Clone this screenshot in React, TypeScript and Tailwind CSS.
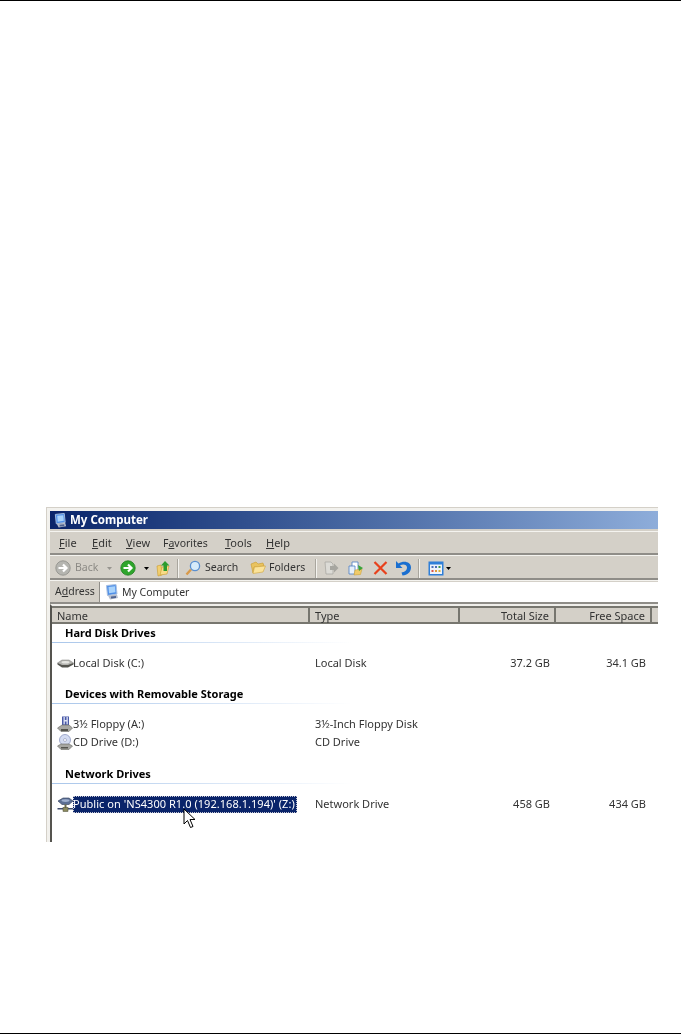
import type { ReactNode } from "react"

const font = "font-['Noto_Sans','Liberation_Sans',sans-serif]"

function U({ before = "", letter, after }: { before?: string; letter: string; after: string }) {
    return <span>{before}<span className="underline underline-offset-1">{letter}</span>{after}</span>
}

function ComputerIcon({ size = 16 }: { size?: number }) {
    return <svg width={size} height={size} viewBox="0 0 16 16" className="shrink-0">
        <path d="M2.5 1.5 L12 0.5 L13 10 L3.5 11.5 Z" fill="#4f8fe8" stroke="#a9c0e0" strokeWidth="1" />
        <path d="M4.5 3 L11 2.3 L11.5 8.2 L5 9.2 Z" fill="#a9d3fb" />
        <path d="M4 11.5 L13 10.5 L14 14 L6 15.5 Z" fill="#b4bccb" />
        <path d="M7 12.5 L12 12 L12 14 L7 14.5 Z" fill="#4f6390" />
    </svg>
}

function ArrowCircle({ color, dark, size = 16 }: { color: string; dark: string; size?: number }) {
    return <svg width={size} height={size} viewBox="0 0 16 16" className="shrink-0">
        <circle cx="8" cy="8" r="7.2" fill={color} stroke={dark} strokeWidth="0.8" />
        <path d="M3.5 8 H11 M8 4.5 L11.5 8 L8 11.5" fill="none" stroke="#fff" strokeWidth="2.2" />
    </svg>
}

function Caret({ color = "#000" }: { color?: string }) {
    return <svg width="5" height="3" viewBox="0 0 5 3" className="shrink-0"><path d="M0 0 H5 L2.5 3 Z" fill={color} /></svg>
}

function Sep() {
    return <div className="w-[2px] h-[19px] bg-[#a9a69e] border-r border-[#f4f3ef] shrink-0" />
}

function Folder({ w = 16 }: { w?: number }) {
    return <svg width={w} height="14" viewBox="0 0 16 14" className="shrink-0">
        <path d="M1 3 L6 1 L8 3 L13 2 L14 5 L4 6 L3 12 Z" fill="#e9c35f" stroke="#c99b2c" strokeWidth="0.6" />
        <path d="M3 12.5 L4.5 6 L15.5 5 L13 11 Z" fill="#fbe39a" stroke="#d2a63a" strokeWidth="0.6" />
    </svg>
}

function DiskIcon() {
    return <svg width="17" height="9" viewBox="0 0 17 9" className="shrink-0">
        <path d="M0.5 4 L5 1 H12 L16.5 4 L11 7 H5 Z" fill="#b4b4b0" stroke="#7c7c78" strokeWidth="0.5" />
        <path d="M0.5 4 L5 6 H11 L16.5 4 V5.5 L11 8.5 H5 L0.5 5.5 Z" fill="#55554f" />
        <ellipse cx="8.5" cy="3.2" rx="4" ry="1.3" fill="#e6e6e2" />
    </svg>
}

function FloppyIcon() {
    return <svg width="16" height="17" viewBox="0 0 16 17" className="shrink-0">
        <path d="M5 0.5 H12 V10 H5 Z" fill="#4a5aa8" />
        <path d="M6.5 1 H7.8 V4 H9.5 V1 H10.8 V8.5 H9.5 V5.5 H7.8 V8.5 H6.5 Z" fill="#dfe4f5" />
        <path d="M0.5 12 L5 9 H12 L15.5 12 L12 15.5 H4 Z" fill="#a7a7a3" stroke="#66665f" strokeWidth="0.6" />
        <path d="M4 13 H11 V15 H4 Z" fill="#53534d" />
    </svg>
}

function CdIcon() {
    return <svg width="16" height="16" viewBox="0 0 16 16" className="shrink-0">
        <circle cx="8" cy="6" r="5.5" fill="#d4dcf2" stroke="#7f8bb8" strokeWidth="0.7" />
        <circle cx="8" cy="6" r="1.5" fill="#fff" stroke="#8a92b4" strokeWidth="0.6" />
        <path d="M0.5 12 L4 10 H12 L15.5 12 L12 15.5 H4 Z" fill="#a7a7a3" stroke="#66665f" strokeWidth="0.6" />
        <path d="M4 13 H11 V14.5 H4 Z" fill="#55554f" />
    </svg>
}

function NetDriveIcon() {
    return <svg width="17" height="16" viewBox="0 0 17 16" className="shrink-0">
        <path d="M1 4 L6 1 H12 L16 4 L12 7.5 H5 Z" fill="#5c6f94" stroke="#2d3a58" strokeWidth="0.6" />
        <ellipse cx="8.5" cy="3.6" rx="4" ry="1.4" fill="#9fb0cf" />
        <rect x="7.5" y="7.5" width="2" height="4" fill="#6a6a4c" />
        <rect x="0.5" y="11" width="16" height="1.5" fill="#3f4c6d" />
        <rect x="6" y="10.5" width="5" height="4" fill="#8c8a5e" stroke="#4a4a34" strokeWidth="0.5" />
    </svg>
}

function SectionHead({ children, className }: { children: ReactNode; className: string }) {
    return <div className={className}>
        <div className="h-[17px] pl-[13px] flex items-center font-bold text-[11px] text-black">{children}</div>
        <div className="h-[1px] w-[300px] bg-gradient-to-r from-[#a9c6ea] to-white" />
    </div>
}

function Row({ icon, name, type, total, free, className }: { icon: ReactNode; name: string; type: string; total?: string; free?: string; className: string }) {
    return <div className={`grid grid-cols-[263px_136px_99px_96px] items-center h-[18px] pb-[2px] text-[11px] text-[#333] ${className}`}>
        <div className="flex items-center pl-[5px]"><div className="w-[16px] flex justify-center">{icon}</div><span>{name}</span></div>
        <div>{type}</div>
        <div className="text-right">{total}</div>
        <div className="text-right">{free}</div>
    </div>
}

export default function App() {
    return <div className={`h-[1034px] bg-white flex flex-col ${font}`}>
        <div className="h-[1px] bg-black" />

        <div className="mt-[506px] ml-[46px] w-[612px] h-[335px] border-t border-l border-[#d4d0c8] bg-[#f2f1ed] pt-[3px] pl-[3px] blur-[0.3px]">
            <div className="h-full bg-[#d4d0c8] flex flex-col">
                {/* title bar */}
                <div className="h-[18px] flex items-center bg-gradient-to-r from-[#0a246a] to-[#8eadda] pl-[3px] gap-[2px] text-white font-bold text-[11.5px]">
                    <ComputerIcon size={15} />
                    <span>My Computer</span>
                </div>
                <div className="h-[2px] bg-[#d4d0c8]" />

                {/* menu */}
                <div className="h-[24px] flex items-center pl-[9px] pt-[2px] text-[11px] text-[#333] border-t border-[#f4f3ef] border-b-2 border-b-[#8f8d88]">
                    <div className="w-[33px]"><U letter="F" after="ile" /></div>
                    <div className="w-[34px]"><U letter="E" after="dit" /></div>
                    <div className="w-[37px]"><U letter="V" after="iew" /></div>
                    <div className="w-[62px] text-[10.5px]"><U before="F" letter="a" after="vorites" /></div>
                    <div className="w-[41px]"><U letter="T" after="ools" /></div>
                    <div><U letter="H" after="elp" /></div>
                </div>

                {/* toolbar */}
                <div className="h-[25px] flex items-center pl-[5px] pt-[2px] text-[10.5px] text-[#333] border-t border-[#f4f3ef] border-b-2 border-b-[#8f8d88]">
                    <ArrowCircle color="#b5b5b0" dark="#8d8d88" />
                    <span className="ml-[4px] w-[27px] text-[#8c8a85]">Back</span>
                    <div className="ml-[5px]"><Caret color="#97958f" /></div>
                    <div className="ml-[8px]"><ArrowCircle color="#2fa52c" dark="#1e7e1e" /></div>
                    <div className="ml-[8px]"><Caret /></div>
                    <div className="ml-[7px]">
                        <svg width="15" height="17" viewBox="0 0 15 17">
                            <path d="M1 6 L5 5 L6 15 L2 16 Z" fill="#f2cf70" stroke="#c99b2c" strokeWidth="0.6" />
                            <path d="M4 15 L6 7 L13 6 L11 14 Z" fill="#f8dc88" stroke="#c99b2c" strokeWidth="0.6" />
                            <path d="M9 1 L13.5 5.5 H11 V11 H7.5 V5.5 H5 Z" fill="#2b9c2e" />
                        </svg>
                    </div>
                    <div className="ml-[6px]"><Sep /></div>
                    <div className="ml-[6px]">
                        <svg width="16" height="16" viewBox="0 0 16 16">
                            <path d="M6 9.5 L1.5 14.5" stroke="#d99a4a" strokeWidth="2.4" />
                            <circle cx="10" cy="6" r="4.6" fill="#d7ebfa" stroke="#5a8fd0" strokeWidth="1.3" />
                        </svg>
                    </div>
                    <span className="ml-[4px] w-[36px]">Search</span>
                    <div className="ml-[9px]"><Folder /></div>
                    <span className="ml-[3px] w-[38px]">Folders</span>
                    <div className="ml-[8px]"><Sep /></div>
                    <div className="ml-[6px]">
                        <svg width="16" height="15" viewBox="0 0 16 15">
                            <path d="M2 1 H8 L10 3 V13 H3 Z" fill="#dcdbd6" stroke="#a5a49e" strokeWidth="0.7" />
                            <path d="M7 5 H11 V2.5 L15.5 7 L11 11.5 V9 H7 Z" fill="#a7a6a0" />
                        </svg>
                    </div>
                    <div className="ml-[9px]">
                        <svg width="16" height="15" viewBox="0 0 16 15">
                            <path d="M4 1 H10 V10 H4 Z" fill="#fff" stroke="#4d7ec4" strokeWidth="0.8" />
                            <path d="M1 5 H7 V13 H1 Z" fill="#e6f0fb" stroke="#4d7ec4" strokeWidth="0.8" />
                            <path d="M7 9 L14 8 L12.5 13.5 L6 14 Z" fill="#f0cb6a" stroke="#c99b2c" strokeWidth="0.5" />
                            <path d="M10 4 L15 7 L11 10 Z" fill="#3aa33a" />
                        </svg>
                    </div>
                    <div className="ml-[9px]">
                        <svg width="15" height="14" viewBox="0 0 15 14">
                            <path d="M1.5 1 L13.5 13 M13.5 1 L1.5 13" stroke="#e8411c" strokeWidth="2.2" />
                        </svg>
                    </div>
                    <div className="ml-[7px]">
                        <svg width="17" height="16" viewBox="0 0 17 16">
                            <path d="M1 1 V8 H7.5 L5 5.5 C8 3.5 12 4.5 12 7.5 C12 10.5 9.5 12 6.5 12.5 L7.5 15.5 C12.5 15 16 12 16 7.5 C16 2 9 0 3.5 3.5 Z" fill="#1a6fd0" />
                        </svg>
                    </div>
                    <div className="ml-[6px]"><Sep /></div>
                    <div className="ml-[8px]">
                        <svg width="16" height="15" viewBox="0 0 16 15">
                            <rect x="0.5" y="0.5" width="15" height="14" fill="#2f7fd8" />
                            <rect x="2" y="3.5" width="12" height="9.5" fill="#eef3fa" />
                            <rect x="3.5" y="5" width="2" height="2" fill="#4a6fb8" />
                            <rect x="7" y="5" width="2" height="2" fill="#4a6fb8" />
                            <rect x="10.5" y="5" width="2" height="2" fill="#3f9a4a" />
                            <rect x="3.5" y="9" width="2" height="2" fill="#d9534a" />
                            <rect x="7" y="9" width="2" height="2" fill="#e09a3a" />
                            <rect x="10.5" y="9" width="2" height="2" fill="#d9b23a" />
                        </svg>
                    </div>
                    <div className="ml-[2px]"><Caret /></div>
                </div>

                {/* address */}
                <div className="h-[24px] flex items-center pl-[5px] pt-[1px] text-[10.5px] text-[#333] border-t border-[#f4f3ef] border-b-2 border-b-[#8f8d88]">
                    <div className="w-[44px]"><U before="A" letter="d" after="dress" /></div>
                    <div className="flex-1 h-[20px] bg-white border-l border-[#8f8d88] flex items-center pl-[4px] gap-[2px]">
                        <ComputerIcon size={16} />
                        <span className="pt-[1px]">My Computer</span>
                    </div>
                </div>

                {/* file list */}
                <div className="flex-1 flex flex-col bg-white border-t-[2px] border-t-[#f0efeb] border-l-2 border-l-[#55544f]">
                    <div className="h-[18px] shrink-0 flex bg-[#d4d0c8] border-t-2 border-t-[#77766f] border-b-2 border-b-[#77766f] text-[11px] text-[#333] leading-[15px]">
                        <div className="w-[258px] pl-[5px] border-r-2 border-r-[#77766f]">Name</div>
                        <div className="w-[150px] pl-[5px] border-r-2 border-r-[#77766f]">Type</div>
                        <div className="w-[96px] pr-[5px] text-right border-r-2 border-r-[#77766f]">Total Size</div>
                        <div className="w-[96px] pr-[5px] text-right border-r-2 border-r-[#77766f]">Free Space</div>
                    </div>

                    <SectionHead className="mt-[1px]">Hard Disk Drives</SectionHead>
                    <Row className="mt-[12px]" icon={<DiskIcon />} name="Local Disk (C:)" type="Local Disk" total="37.2 GB" free="34.1 GB" />

                    <SectionHead className="mt-[13px]">Devices with Removable Storage</SectionHead>
                    <Row className="mt-[12px]" icon={<FloppyIcon />} name="3½ Floppy (A:)" type="3½-Inch Floppy Disk" />
                    <Row className="" icon={<CdIcon />} name="CD Drive (D:)" type="CD Drive" />

                    <SectionHead className="mt-[14px]">Network Drives</SectionHead>
                    <div className="relative mt-[12px] grid grid-cols-[263px_136px_99px_96px] items-center h-[18px] pb-[2px] text-[11px] text-[#333]">
                        <div className="flex items-center pl-[5px]">
                            <div className="w-[16px] flex justify-center"><NetDriveIcon /></div>
                            <span className="w-[224px] h-[17px] shrink-0 flex items-center bg-[#0a246a] text-white tracking-[0.04px] outline-1 outline-dotted -outline-offset-1 outline-[#c4c4d0]">Public on 'NS4300 R1.0 (192.168.1.194)' (Z:)</span>
                        </div>
                        <div className="col-start-2">Network Drive</div>
                        <div className="text-right">458 GB</div>
                        <div className="text-right">434 GB</div>
                        {/* mouse pointer over the selected row */}
                        <svg width="15" height="21" viewBox="0 0 15 21" className="absolute left-[131px] top-[12px]">
                            <path d="M1 1 V16 L4.5 12.5 L7.5 19.5 L10 18.5 L7 11.5 L12 11.5 Z" fill="#fff" stroke="#000" strokeWidth="1" />
                        </svg>
                    </div>
                </div>
            </div>
        </div>

        <div className="mt-auto h-[1px] bg-black" />
    </div>
}
